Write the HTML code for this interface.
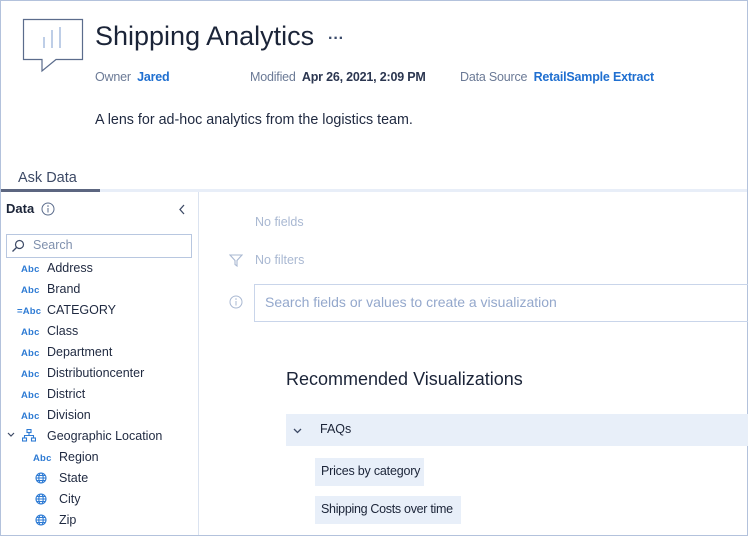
<!DOCTYPE html>
<html><head><meta charset="utf-8"><style>
*{margin:0;padding:0;box-sizing:border-box}
html,body{width:748px;height:536px;overflow:hidden;background:#fff}
body{font-family:"Liberation Sans",sans-serif;position:relative;color:#1f2940}
#frame{position:absolute;left:0;top:0;width:748px;height:536px;border:1px solid #b3c2dc}
.a{position:absolute;white-space:nowrap}
.abc{position:absolute;font-size:9.5px;color:#2e7bd4;font-weight:bold;letter-spacing:0.2px}
.f{position:absolute;font-size:12.5px;color:#1f2940}
</style></head><body>
<div id="frame"></div>
<svg class="a" style="left:22px;top:18px" width="62" height="56" viewBox="0 0 62 56">
<path d="M1.5 1.5H60.5V41.5H34L20 53V41.5H1.5Z" fill="none" stroke="#5b6c8c" stroke-width="1.2"/>
<line x1="22" y1="19" x2="22" y2="30" stroke="#a9bedf" stroke-width="1.5"/>
<line x1="30" y1="12" x2="30" y2="30" stroke="#a9bedf" stroke-width="1.5"/>
<line x1="38" y1="9" x2="38" y2="30" stroke="#a9bedf" stroke-width="1.5"/>
</svg>
<div class="a" style="left:95px;top:21px;font-size:27px;color:#1b2438">Shipping Analytics</div>
<div class="a" style="left:328px;top:30px;font-size:16px;color:#3a4a6a;font-weight:bold;letter-spacing:0px">···</div>
<div class="a" style="left:95px;top:70px;font-size:12.5px;color:#6b7a96;letter-spacing:-0.2px">Owner <b style="color:#1f6fd0;margin-left:3px">Jared</b></div>
<div class="a" style="left:250px;top:70px;font-size:12.5px;color:#6b7a96;letter-spacing:-0.2px">Modified <b style="color:#2b3650;margin-left:3px">Apr 26, 2021, 2:09 PM</b></div>
<div class="a" style="left:460px;top:70px;font-size:12.5px;color:#6b7a96;letter-spacing:-0.2px">Data Source <b style="color:#1f6fd0;margin-left:3px">RetailSample Extract</b></div>
<div class="a" style="left:95px;top:112px;font-size:14.3px;color:#1f2940">A lens for ad-hoc analytics from the logistics team.</div>
<div class="a" style="left:18px;top:170px;font-size:14.5px;color:#3d4a66">Ask Data</div>
<div class="a" style="left:1px;top:189px;width:746px;height:3px;background:#e8eef8"></div>
<div class="a" style="left:1px;top:189px;width:99px;height:3px;background:#5c6680"></div>
<div class="a" style="left:198px;top:192px;width:1px;height:343px;background:#dbe3f0"></div>
<div class="a" style="left:6px;top:201px;font-size:13px;font-weight:bold;color:#1b2438">Data</div>
<svg class="a" style="left:41px;top:202px" width="14" height="14" viewBox="0 0 14 14"><circle cx="7" cy="7" r="6" fill="none" stroke="#5b6c8c"/><line x1="7" y1="6" x2="7" y2="10.5" stroke="#5b6c8c"/><circle cx="7" cy="4" r="0.8" fill="#5b6c8c"/></svg>
<svg class="a" style="left:178px;top:204px" width="8" height="11" viewBox="0 0 8 11"><path d="M6 1L2 5.5L6 10" fill="none" stroke="#3d4a66" stroke-width="1.3"/></svg>
<div class="a" style="left:6px;top:234px;width:186px;height:24px;border:1px solid #b8c7e0"></div>
<svg class="a" style="left:11px;top:239px" width="14" height="14" viewBox="0 0 14 14"><circle cx="8.5" cy="5.5" r="4" fill="none" stroke="#3d4a66" stroke-width="1.2"/><line x1="5.5" y1="8.5" x2="1.5" y2="12.5" stroke="#3d4a66" stroke-width="1.3"/></svg>
<div class="a" style="left:33px;top:238px;font-size:12.5px;color:#7f90ad">Search</div>

<div class="abc" style="left:21px;top:264px">Abc</div><div class="f" style="left:47px;top:261px">Address</div>
<div class="abc" style="left:21px;top:285px">Abc</div><div class="f" style="left:47px;top:282px">Brand</div>
<div class="abc" style="left:17px;top:306px">=Abc</div><div class="f" style="left:47px;top:303px">CATEGORY</div>
<div class="abc" style="left:21px;top:327px">Abc</div><div class="f" style="left:47px;top:324px">Class</div>
<div class="abc" style="left:21px;top:348px">Abc</div><div class="f" style="left:47px;top:345px">Department</div>
<div class="abc" style="left:21px;top:369px">Abc</div><div class="f" style="left:47px;top:366px">Distributioncenter</div>
<div class="abc" style="left:21px;top:390px">Abc</div><div class="f" style="left:47px;top:387px">District</div>
<div class="abc" style="left:21px;top:411px">Abc</div><div class="f" style="left:47px;top:408px">Division</div>
<svg class="a" style="left:7px;top:432px" width="8" height="6" viewBox="0 0 8 6"><path d="M1 1L4 4L7 1" fill="none" stroke="#3d4a66" stroke-width="1.2"/></svg>
<svg class="a" style="left:22px;top:429px" width="14" height="13" viewBox="0 0 14 13"><g fill="none" stroke="#2e7bd4" stroke-width="1.1"><rect x="5" y="0.5" width="4" height="3"/><rect x="0.5" y="9" width="4" height="3"/><rect x="9.5" y="9" width="4" height="3"/><path d="M7 3.5V6.5M2.5 9V6.5H11.5V9"/></g></svg>
<div class="f" style="left:47px;top:429px">Geographic Location</div>
<div class="abc" style="left:33px;top:453px">Abc</div><div class="f" style="left:59px;top:450px">Region</div>
<svg class="a" style="left:35px;top:472px" width="12" height="12" viewBox="0 0 12 12"><g fill="none" stroke="#2e7bd4" stroke-width="1.1"><circle cx="6" cy="6" r="5"/><ellipse cx="6" cy="6" rx="2.2" ry="5"/><path d="M1 6H11M1.8 3.5H10.2M1.8 8.5H10.2"/></g></svg>
<div class="f" style="left:59px;top:471px">State</div>
<svg class="a" style="left:35px;top:493px" width="12" height="12" viewBox="0 0 12 12"><g fill="none" stroke="#2e7bd4" stroke-width="1.1"><circle cx="6" cy="6" r="5"/><ellipse cx="6" cy="6" rx="2.2" ry="5"/><path d="M1 6H11M1.8 3.5H10.2M1.8 8.5H10.2"/></g></svg>
<div class="f" style="left:59px;top:492px">City</div>
<svg class="a" style="left:35px;top:514px" width="12" height="12" viewBox="0 0 12 12"><g fill="none" stroke="#2e7bd4" stroke-width="1.1"><circle cx="6" cy="6" r="5"/><ellipse cx="6" cy="6" rx="2.2" ry="5"/><path d="M1 6H11M1.8 3.5H10.2M1.8 8.5H10.2"/></g></svg>
<div class="f" style="left:59px;top:513px">Zip</div>

<div class="a" style="left:255px;top:215px;font-size:12.5px;color:#a9b8d2">No fields</div>
<svg class="a" style="left:229px;top:254px" width="14" height="13" viewBox="0 0 14 13"><path d="M1 1H13L8 6.5V12L6 10.5V6.5Z" fill="none" stroke="#a9b8d2" stroke-width="1.1"/></svg>
<div class="a" style="left:255px;top:253px;font-size:12.5px;color:#a9b8d2">No filters</div>
<svg class="a" style="left:229px;top:295px" width="14" height="14" viewBox="0 0 14 14"><circle cx="7" cy="7" r="6" fill="none" stroke="#a9b8d2"/><line x1="7" y1="6" x2="7" y2="10.5" stroke="#a9b8d2"/><circle cx="7" cy="4" r="0.8" fill="#a9b8d2"/></svg>
<div class="a" style="left:254px;top:284px;width:500px;height:38px;border:1px solid #c9d5ea"></div>
<div class="a" style="left:265px;top:294px;font-size:14px;color:#94a8cc">Search fields or values to create a visualization</div>
<div class="a" style="left:286px;top:369px;font-size:18px;color:#1b2438">Recommended Visualizations</div>
<div class="a" style="left:286px;top:414px;width:462px;height:32px;background:#e8eff9"></div>
<svg class="a" style="left:293px;top:428px" width="9" height="6" viewBox="0 0 9 6"><path d="M1 1L4.5 4.5L8 1" fill="none" stroke="#3d4a66" stroke-width="1.3"/></svg>
<div class="a" style="left:320px;top:422px;font-size:12.5px;color:#1b2438">FAQs</div>
<div class="a" style="left:315px;top:458px;width:109px;height:28px;background:#e8eff9"></div>
<div class="a" style="left:321px;top:464px;font-size:12.5px;color:#1b2438;letter-spacing:-0.2px">Prices by category</div>
<div class="a" style="left:315px;top:496px;width:146px;height:28px;background:#e8eff9"></div>
<div class="a" style="left:321px;top:502px;font-size:12.5px;color:#1b2438;letter-spacing:-0.3px">Shipping Costs over time</div>
</body></html>
